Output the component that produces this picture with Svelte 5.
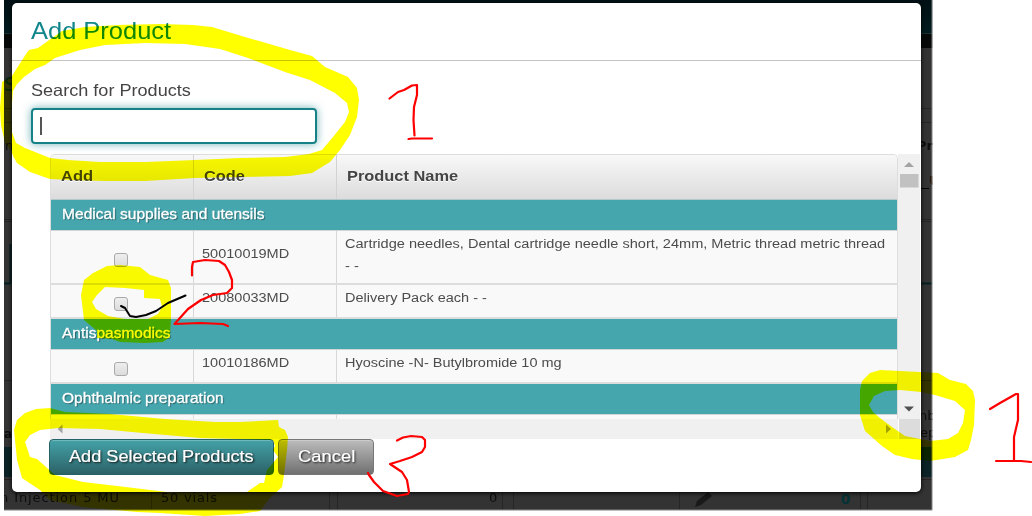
<script>
  const rows = [
    { group: 'Medical supplies and utensils', width: 203 },
    { code: '50010019MD', name: 'Cartridge needles, Dental cartridge needle short, 24mm, Metric thread metric thread', width: 540, extra: '- -', tall: true },
    { code: '20080033MD', name: 'Delivery Pack each - -', width: 142 },
    { group: 'Antispasmodics', width: 109 },
    { code: '10010186MD', name: 'Hyoscine -N- Butylbromide 10 mg', width: 217 },
    { group: 'Ophthalmic preparation', width: 162 }
  ];

  // Stretches a label horizontally to the given width.
  function fit(node, width) {
    node.style.transform = `scaleX(${width / node.offsetWidth})`;
  }
</script>

<div class="stage">
  <svg class="page" viewBox="0 0 1032 516" width="1032" height="516">
    <defs>
      <linearGradient id="bar" x1="0" x2="0" y1="0" y2="1">
        <stop offset="0" stop-color="#001014" />
        <stop offset="1" stop-color="#001b1e" />
      </linearGradient>
    </defs>
    <rect x="4" y="0" width="928.5" height="510.5" fill="#333" />
    <rect x="4" y="0" width="928.5" height="33" fill="url(#bar)" />
    <rect x="4" y="33" width="928.5" height="1" fill="#1c302e" />
    <rect x="4" y="34" width="928.5" height="14" fill="#070909" />
    <path d="M4 108.5h928M4 122.500h928M4 219.500h928M4 221.500h928M4 380.500h928M4 479.500h928" stroke="#252525" />
    <path d="M921 188.500h8" stroke="#000" />
    <path d="M4 283.500h7M10.500 244v39M921 283.500h11" stroke="#041f22" stroke-width="2" />
    <rect x="4" y="447" width="928" height="30" fill="#0b2326" />
    <path d="M151.500 480v30M329.500 480v30M337.500 480v30M502.500 480v30M513.500 480v30M679.500 480v30M860.500 480v30M867.500 480v30" stroke="#262626" />
    <g fill="#0c0c0c" font-family="DejaVu Sans, sans-serif" font-size="13">
      <text x="4" y="91" font-size="20" fill="#02282a">S</text>
      <text x="5" y="150">n</text>
      <text x="4" y="438" font-weight="bold" font-size="12">a</text>
      <text x="0" y="502" textLength="119">n Injection 5 MU</text>
      <text x="161" y="502" textLength="56">50 vials</text>
      <text x="489" y="502">0</text>
      <text x="917" y="150" font-weight="bold">Pro</text>
      <text x="929" y="185" fill="#1c0d00" font-weight="bold">U</text>
      <text x="919" y="420">nb</text>
      <text x="920" y="437">ep</text>
      <text x="841" y="503.500" fill="#023337" font-weight="bold" font-size="14">0</text>
    </g>
    <path d="M695 507l2-6 11-9 4 4-11 9z" fill="#191919" />
    <rect x="0" y="0" width="4" height="516" fill="#fff" />
    <rect x="932.500" y="0" width="99.500" height="516" fill="#fff" />
    <rect x="0" y="510.500" width="1032" height="6" fill="#fff" />
    <path d="M932 0v510H4" fill="none" stroke="#aaa" stroke-width=".7" />
  </svg>

  <section class="modal">
    <header><h1><span class="t" use:fit={140}>Add Product</span></h1></header>
    <div class="search">
      <label for="q"><span class="t" use:fit={160}>Search for Products</span></label>
      <div class="input" id="q"><i></i></div>
    </div>
    <div class="scroller">
      <div class="table">
        <div class="row head">
          <b><span class="t" use:fit={32}>Add</span></b>
          <b><span class="t" use:fit={41}>Code</span></b>
          <b><span class="t" use:fit={111}>Product Name</span></b>
        </div>
        {#each rows as r}
          {#if r.group}
            <div class="group"><span class="t" use:fit={r.width}>{r.group}</span></div>
          {:else}
            <div class="row item" class:tall={r.tall}>
              <div class="check"><i></i></div>
              <div class="code"><span class="t" use:fit={87}>{r.code}</span></div>
              <div class="name">
                <span class="t" use:fit={r.width}>{r.name}</span>
                {#if r.extra}<span class="t" use:fit={14}>{r.extra}</span>{/if}
              </div>
            </div>
          {/if}
        {/each}
        <div class="row rest"><i></i><i></i><i></i></div>
      </div>
      <div class="vbar">
        <svg width="22" height="265" viewBox="0 0 22 265">
          <path d="M6 13l5-5 5 5z" fill="#a3a3a3" />
          <path d="M2 20h18.500v13.500H2z" fill="#c1c1c1" />
          <path d="M6 252.500h10l-5 5z" fill="#505050" />
        </svg>
      </div>
      <div class="hbar">
        <svg width="848" height="20" viewBox="0 0 848 20">
          <path d="M12.500 5.500v9l-5-4.500z" fill="#a3a3a3" />
          <path d="M836 5.500v9l5-4.500z" fill="#a3a3a3" />
        </svg>
      </div>
      <div class="corner"></div>
    </div>
    <footer>
      <button class="primary"><span class="t" use:fit={185}>Add Selected Products</span></button>
      <button class="cancel"><span class="t" use:fit={57}>Cancel</span></button>
    </footer>
  </section>

  <svg class="marker" viewBox="0 0 1032 516" width="1032" height="516">
    <g fill="#ff0" fill-rule="evenodd">
      <path d="M2 82L12 76 26 54 29 50 38 48 62 31 85 27 118 25 160 24 193 25 212 27 245 37 290 50 312 56 325 67 348 77 357 88 359 100 357 117 350 135 340 150 330 162 312 173 290 176 240 177 195 178 145 181 105 181 72 180 50 179 30 172 17 163 13 156 11 150 5 143 1 125 0 108ZM13 91L17 84 24 77 35 69 45 65 55 58 80 50 105 45 145 43 185 44 220 49 248 58 285 72 310 80 335 93 347 103 349 112 345 122 333 137 322 150 309 154 285 157 240 158 195 160 145 162 100 162 68 160 50 158 25 148 16 143 12 132 11 115Z" />
      <path d="M81 295L84 280 93 273 107 266 120 265 140 267 150 275 168 280 171 288 171 317 170 337 163 342 145 343 120 342 112 339 97 338 97 331 84 320ZM92 302L97 295 105 287 125 288 144 290 144 298 160 299 162 307 158 314 148 319 125 319 108 316 96 309Z" />
      <path d="M14 430L17 420 25 413 36 409 50 408 65 412 88 413 110 414 165 419 215 422 240 422 278 420 279 427 285 430 288 437 287 450 284 475 282 487 270 498 260 511 240 514 205 516 160 513 137 512 83 507 50 500 40 490 22 478 17 460ZM25 442L30 435 40 430 58 428 100 429 143 433 200 438 273 440 275 446 273 450 278 457 273 463 267 470 264 483 260 483 247 492 167 492 117 486 83 482 55 475 37 459 30 457Z" />
      <path d="M860 390L862 381 870 373 880 370 920 372 938 373 950 380 966 384 973 391 975 400 974 425 971 440 968 450 955 457 930 461 912 459 895 455 882 446 865 431 860 415ZM869 405L874 396 885 391 900 390 921 392 935 395 955 401 965 410 963 423 958 433 948 439 930 441 905 436 892 427 880 418 873 412Z" />
    </g>
  </svg>
  <svg class="pen" viewBox="0 0 1032 516" width="1032" height="516">
    <g fill="none" stroke="#f00" stroke-width="2.2" stroke-linecap="round" stroke-linejoin="round">
      <path d="M389.500 98.500L398 92 404 90 412 85.500 417 85 417 95 414 107 413.500 120 414.500 135.500M408.500 139L412 138.500 432 138.500" />
      <path d="M192 275.500L192 267 193 262 205 260 219 261 225 265 229 272 232 280 232 288 227 293 213 295 201 300 188 309 174.500 324 200 323 223 324 228 326" />
      <path d="M397 440.500L403 437.500 411 436 422 437 425 440 425 447 422 452 412 457 400 461 390 464 402 472 407 480 409 492 408 494 397 496 383 491 374 482 369 475 368 473" />
      <path d="M990 409L1000 403 1016 394 1018 394 1018 420 1014 437 1014 460M996 461L1021 461 1031 462" />
    </g>
    <path d="M121 306L125 308 130 316 136 317 146 315 156 311 168 303 185.500 295.500" fill="none" stroke="#000" stroke-width="2" stroke-linecap="round" stroke-linejoin="round" />
  </svg>
</div>

<style>
  :global(body) { margin: 0; background: #fff; }
  .stage {
    position: relative;
    box-sizing: border-box;
    width: 1032px;
    height: 516px;
    padding: 3px 0 0 12px;
    overflow: hidden;
    isolation: isolate;
    background: #fff;
    font-family: "Liberation Sans", Arial, sans-serif;
    color: #444;
  }
  .page, .marker, .pen { position: absolute; left: 0; top: 0; pointer-events: none; }
  .page { z-index: -1; }
  .marker { mix-blend-mode: multiply; }
  .t { display: inline-block; width: max-content; white-space: nowrap; transform-origin: left; }
  .modal {
    box-sizing: border-box;
    width: 909px;
    height: 489px;
    background: #fff;
    border-radius: 5px;
    box-shadow: 0 1px 4px #000;
    clip-path: inset(-3px -8px -8px -8px);
  }
  header { box-sizing: border-box; height: 58px; padding: 13px 19px; border-bottom: 1px solid #c4c4c4; }
  h1 { margin: 0; font-size: 24px; line-height: 30px; font-weight: 400; color: #11868b; }
  .search { box-sizing: border-box; height: 93px; padding: 18px 19px 0; }
  label { display: block; height: 29px; font-size: 16.500px; line-height: 23px; }
  .input {
    box-sizing: border-box;
    width: 286px;
    height: 36px;
    padding: 7px 7px;
    border: 2px solid #168187;
    border-radius: 4px;
    box-shadow: 0 0 9px rgba(20, 130, 136, .6);
  }
  .input i { display: block; width: 2px; height: 18px; background: #555; }
  .scroller {
    display: grid;
    width: 870px;
    margin-left: 38px;
    grid-template: 265px 20px / 848px 22px;
  }
  .table {
    box-sizing: border-box;
    height: 265px;
    overflow: hidden;
    border: 1px solid #ddd;
    border-bottom: 0;
    border-radius: 5px 5px 0 0;
    background: #f9f9f9;
  }
  .row { display: grid; grid-template-columns: 142px 143px 1fr; box-sizing: border-box; }
  .head { height: 45px; background: linear-gradient(#f8f8f8, #dcdcdc); border-bottom: 1px solid #b4c8ca; }
  .head b { padding: 10px 0 0 10px; font-size: 15.500px; line-height: 21px; border-left: 1px solid #d2d2d2; text-shadow: 0 1px 0 #fff; }
  .head b:first-child, .item > :first-child, .rest i:first-child { border-left: 0; }
  .group {
    box-sizing: border-box;
    height: 31px;
    padding-left: 11px;
    border-bottom: 1px solid #d0d6d6;
    background: #46a6ae;
    color: #fff;
    font-size: 14.500px;
    line-height: 29px;
    -webkit-text-stroke: .3px #fff;
    text-shadow: 1px 1px 1px #285f64;
  }
  .item { height: 34px; border-bottom: 2px solid #ddd; font-size: 13.700px; line-height: 22px; color: #4c4c4c; }
  .item.tall { height: 54px; }
  .item > div { border-left: 1px solid #d8d8d8; }
  .check { display: flex; justify-content: center; padding: 12px 2px 0 0; }
  .tall .check { padding-top: 22px; }
  .check i { box-sizing: border-box; width: 14px; height: 14px; border: 1px solid #aaa; border-radius: 3px; background: linear-gradient(#eee, #dcdcdc); }
  .code { padding: 2px 0 0 8px; }
  .tall .code { padding-top: 12px; }
  .name { padding: 2px 0 0 8px; }
  .name .t { display: block; }
  .rest { height: 6px; }
  .rest i { border-left: 1px solid #ddd; }
  .vbar, .hbar { background: #f0f0f0; }
  .vbar svg, .hbar svg { display: block; }
  .corner { margin-left: 1px; background: #dcdcdc; }
  footer { display: flex; gap: 4px; padding-left: 37px; }
  button {
    box-sizing: border-box;
    height: 36px;
    padding: 0 0 0 19px;
    border: 1px solid #246267;
    border-radius: 4px;
    color: #fff;
    font: 16.800px/32px "Liberation Sans", Arial, sans-serif;
    text-align: left;
    text-shadow: 1px 1px 2px #111;
    -webkit-text-stroke: .2px #fff;
    box-shadow: inset 0 1px 0 rgba(255, 255, 255, .25);
  }
  .primary { width: 225px; background: linear-gradient(#43a2a8, #2c6267); }
  .cancel { width: 96px; border-color: #777; background: linear-gradient(#bcbcbc, #707070); }
</style>
